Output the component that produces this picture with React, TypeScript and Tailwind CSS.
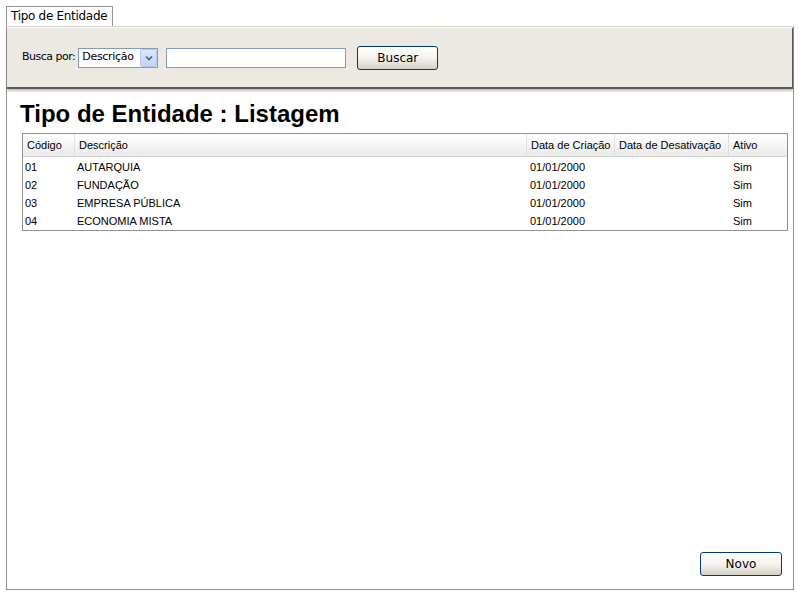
const rows = [
  { codigo: "01", descricao: "AUTARQUIA", criacao: "01/01/2000", desativacao: "", ativo: "Sim" },
  { codigo: "02", descricao: "FUNDAÇÃO", criacao: "01/01/2000", desativacao: "", ativo: "Sim" },
  { codigo: "03", descricao: "EMPRESA PÚBLICA", criacao: "01/01/2000", desativacao: "", ativo: "Sim" },
  { codigo: "04", descricao: "ECONOMIA MISTA", criacao: "01/01/2000", desativacao: "", ativo: "Sim" },
];

const cols = [
  { label: "Código", w: "w-[52px]" },
  { label: "Descrição", w: "w-[452px]" },
  { label: "Data de Criação", w: "w-[88px]" },
  { label: "Data de Desativação", w: "w-[114px]" },
  { label: "Ativo", w: "flex-1" },
];

function XpButton({ children, className }: { children: string; className: string }) {
  return (
    <button
      className={
        "h-[24px] rounded-[3px] border border-[#003c74] bg-gradient-to-b from-[#ffffff] via-[#f4f3ee] to-[#d6d0c5] text-[12px] text-black " +
        className
      }
    >
      {children}
    </button>
  );
}

export default function App() {
  return (
    <div className="w-[800px] h-[600px] bg-white relative font-['DejaVu_Sans',sans-serif]">
      <div className="pt-[6px] pl-[6px]">
        <div className="w-[107px] h-[20px] border border-b-0 border-[#919191] bg-white text-[12px] leading-[18px] pl-[4px] tracking-[-0.3px]">
          Tipo de Entidade
        </div>
      </div>
      <div className="ml-[6px] w-[788px] h-[564px] border border-[#919191] border-t-[#d4d4d4] flex flex-col">
        <div className="mt-[1px] h-[61px] bg-[#ece9e2] border-b-[2px] border-r-[1px] border-[#5a5a5a] shadow-[0_2px_2px_rgba(0,0,0,0.25)] flex items-center pl-[15px] text-[11px]">
          <span className="tracking-[-0.5px]">Busca por:</span>
          <div className="ml-[3px] w-[80px] h-[20px] border border-[#7f9db9] bg-white flex items-center justify-between">
            <span className="pl-[3px] tracking-[-0.3px]">Descrição</span>
            <div className="w-[17px] h-[18px] bg-gradient-to-b from-[#dce6fb] to-[#c1d3f7] border border-[#b5c8f0] rounded-[2px] flex items-center justify-center">
              <svg width="8" height="6" viewBox="0 0 8 6">
                <path d="M1 1.5 L4 4.5 L7 1.5" stroke="#4d6185" strokeWidth="1.6" fill="none" />
              </svg>
            </div>
          </div>
          <div className="ml-[8px] w-[180px] h-[20px] border border-[#7f9db9] bg-white" />
          <XpButton className="ml-[11px] w-[81px] mt-[1px]">Buscar</XpButton>
        </div>
        <div className="flex-1 flex flex-col pl-[15px] pr-[5px] font-['Liberation_Sans',Arial,sans-serif]">
          <h1 className="mt-[11px] ml-[-2px] text-[24px] leading-[28px] font-bold text-black">
            Tipo de Entidade : Listagem
          </h1>
          <div className="mt-[5px] border border-[#919191] text-[11px]">
            <div className="flex h-[23px] bg-gradient-to-b from-[#ffffff] to-[#ebebeb] border-b border-[#d5d5d5]">
              {cols.map((c, i) => (
                <div
                  key={i}
                  className={c.w + " flex items-center pl-[4px] " + (i < cols.length - 1 ? "border-r border-[#e0e0e0]" : "")}
                >
                  {c.label}
                </div>
              ))}
            </div>
            <div className="pt-[1px]">
              {rows.map((r) => (
                <div key={r.codigo} className="flex h-[18px] items-center">
                  <div className="w-[52px] pl-[2px]">{r.codigo}</div>
                  <div className="w-[452px] pl-[2px]">{r.descricao}</div>
                  <div className="w-[88px] pl-[3px]">{r.criacao}</div>
                  <div className="w-[114px] pl-[3px]">{r.desativacao}</div>
                  <div className="flex-1 pl-[4px]">{r.ativo}</div>
                </div>
              ))}
            </div>
          </div>
          <div className="mt-auto mb-[13px] flex justify-end">
            <XpButton className="w-[82px] mr-[6px] font-['DejaVu_Sans',sans-serif]">Novo</XpButton>
          </div>
        </div>
      </div>
    </div>
  );
}
